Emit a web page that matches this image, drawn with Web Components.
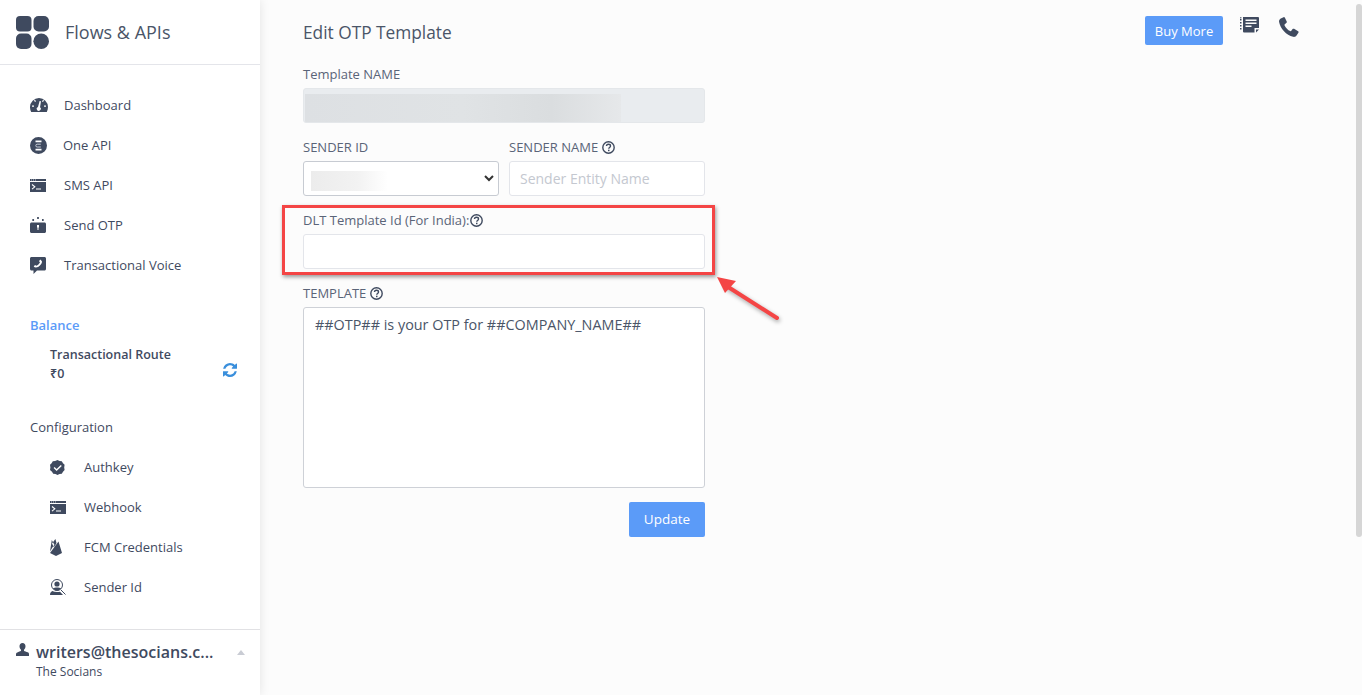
<!DOCTYPE html>
<html>
<head>
<meta charset="utf-8">
<title>Edit OTP Template</title>
<style>
html, body { margin: 0; height: 100%; overflow: hidden; }
body { font-family: "Open Sans", "Noto Sans", sans-serif; color: #3f4a5f; background: #fff; }
</style>
</head>
<body>
<app-shell>
    <side-bar slot="side"></side-bar>
    <otp-form></otp-form>
</app-shell>

<script>
// small icon set used by the sidebar and the top bar
const ICONS = {
    grid: '<svg width="33" height="33" viewBox="0 0 33 33"><rect width="15.500" height="15.500" rx="4"/><rect x="17.500" width="15.500" height="15.500" rx="5"/><rect y="17.500" width="15.500" height="15.500" rx="5"/><circle cx="25.200" cy="25.200" r="7.800"/></svg>',
    gauge: '<svg width="18" height="14" viewBox="0 0 18 14"><path fill-rule="evenodd" d="M9 0a9 9 0 0 1 9 9c0 1.800-.4 3.500-1.200 5H1.200A10 10 0 0 1 0 9a9 9 0 0 1 9-9zM5 1.800 4 2.500l1 1.500 1-.7zM13 1.800l-1 1.700 1 .6 1-1.600zM2 7.500v1.200h2V7.500zM14 7.500v1.200h2V7.500zM9.600 3 8 9a2 2 0 1 0 2 .3l1-6z"/></svg>',
    oneapi: '<svg width="17" height="17" viewBox="0 0 17 17"><path fill-rule="evenodd" d="M8.500 0a8.500 8.500 0 1 1 0 17 8.500 8.500 0 0 1 0-17zM5.500 3.500v1.800h6V3.500zM5.500 11.800v1.800h6v-1.800z"/><path d="M10.800 7.200H7.200a1.300 1.300 0 0 0 0 2.800h3.600" fill="none" stroke="#c9ced8" stroke-width="1"/></svg>',
    term: '<svg width="16" height="13" viewBox="0 0 16 13"><path d="M0 0h16v2H0zM0 3h16v10H0z"/><path d="M1 .5h1v1H1zm2 0h1v1H3zm2 0h1v1H5z" fill="#c9ced8"/><path d="M2 5.500 4.800 7.800 2 10.100" fill="none" stroke="#fff" stroke-width="1.100"/><path d="M6 9.500h5v1H6z" fill="#fff"/></svg>',
    otp: '<svg width="16" height="16" viewBox="0 0 16 16"><path d="M7.300 0h1.400l.3 1-.3 1H7.300L7 1zM2.500 2h1.300l.4 1-.4 1H2.500L2.200 3zM12.200 2h1.300l.3 1-.3 1h-1.300L11.900 3z"/><path fill-rule="evenodd" d="M1.500 5.500h13c.8 0 1.500.7 1.500 1.500v7.500c0 .8-.7 1.500-1.500 1.500h-13C.7 16 0 15.300 0 14.500V7c0-.8.7-1.500 1.500-1.500zM7 8v2.500h.5V13h1v-2.500H9V8z"/></svg>',
    voice: '<svg width="16" height="17" viewBox="0 0 16 17"><path fill-rule="evenodd" d="M1.500 0h13c.8 0 1.500.7 1.500 1.500v10.500c0 .8-.7 1.500-1.500 1.500H7L3.500 17v-3.500h-2C.7 13.500 0 12.800 0 12V1.500C0 .7.700 0 1.500 0zM10.500 2.500 9 4l1 1.500-1.800 2.200-1.700 1L5 8 3.700 9.500c1 1.300 3 1.300 4.800.2 2-1.300 3.500-3.300 3.500-5.200z"/></svg>',
    badge: '<svg width="15" height="15" viewBox="0 0 15 15"><path fill-rule="evenodd" d="M7.500 0l2 1 2.300.2 1.200 2 1.600 1.600-.4 2.700.4 2.600-1.600 1.600-1.200 2-2.300.2-2 1-2-1-2.300-.2-1.200-2L0 10.100l.4-2.600L0 4.800l1.600-1.600 1.200-2L5.100 1zM10.800 5 6.600 9l-2-1.900-1 1 3 3 5.200-5.100z"/></svg>',
    firebase: '<svg width="12" height="17" viewBox="0 0 12 17"><path d="M0 12.500 1.800 1l2.700 5L3 7.500zM5 6.800 6.500 4 5.400 0 2 4.600 3.800 8zM8.500 2.500 12 14l-6 3-6-3z"/></svg>',
    sender: '<svg width="16" height="16" viewBox="0 0 16 16"><circle cx="7" cy="6" r="5.500" fill="none" stroke="currentColor"/><circle cx="7" cy="5" r="2.600"/><path d="M2.800 9.500C4 8.600 5.500 8.500 7 8.500s3 .1 4.200 1L8.500 11.500h-3zM0 16c0-1.900.9-3.100 2.300-3.900 1.400.6 2.900 1 4.700 1 1.200 0 2.100-.1 3-.4l3 3.300z"/><path d="M11 11l4.500 4.500" stroke="currentColor" fill="none"/></svg>',
    refresh: '<svg width="14" height="14" viewBox="0 0 1536 1536"><path d="M1511 928q0 5-1 7-64 268-268 434.500T764 1536q-146 0-282.500-55T238 1324l-129 129q-19 19-45 19t-45-19-19-45V960q0-26 19-45t45-19h448q26 0 45 19t19 45-19 45l-137 137q71 66 161 102t187 36q134 0 250-65t186-179q11-17 53-117 8-23 30-23h192q13 0 22.500 9.500t9.500 22.500zm25-800v448q0 26-19 45t-45 19h-448q-26 0-45-19t-19-45 19-45l138-138Q969 256 768 256q-134 0-250 65T332 500q-11 17-53 117-8 23-30 23H50q-13 0-22.500-9.500T18 608v-7q65-268 270-434.500T768 0q146 0 284 55.500T1297 212l130-129q19-19 45-19t45 19 19 45z"/></svg>',
    user: '<svg width="13" height="13" viewBox="0 0 13 13"><path d="M6.500 0c1.900 0 3 1.400 3 3.300 0 1.300-.6 2.700-1.500 3.400v1c.6.500 2.500 1 3.700 1.600.9.400 1.300 1 1.300 1.700V13H0v-1.900c0-.7.400-1.300 1.300-1.700C2.500 8.800 4.400 8.300 5 7.700v-1C4.100 6 3.500 4.600 3.500 3.300c0-1.900 1.100-3.300 3-3.300z"/></svg>',
    notes: '<svg width="19" height="16" viewBox="0 0 19 16"><path d="M0 2h1.500v1.500H0zM0 5h1.500v1.500H0zM0 8h1.500v1.500H0zM0 11h1.500v1.500H0z"/><path d="M.3 0h1v1.500h-1z"/><path fill-rule="evenodd" d="M3 0h15a1 1 0 0 1 1 1v10h-4.500v4.500H4a1 1 0 0 1-1-1zM5.500 2.500V4h11V2.500zM5.500 5.500V7h11V5.500zM5.500 8.500V10h6V8.500z"/><path d="M16 12.500h3L16 15.500z"/></svg>',
    phone: '<svg width="20" height="20" viewBox="0 0 20 20"><path d="M4.600.2 1.800 1.400C.6 2-.2 3.300.1 4.900c1.300 6.800 7.200 13 14 14.900 1.500.4 2.900-.4 3.600-1.500l1.700-2.600c.3-.5.200-1.100-.3-1.400l-4-2.500c-.5-.3-1.100-.2-1.500.3l-1.500 1.800c-.3.300-.7.400-1 .2C8.900 12.900 6.800 10.700 5.600 8.400c-.2-.4-.1-.8.200-1.100L7.500 5.700c.4-.4.400-1 .1-1.400L5.800.6C5.500.2 5 0 4.600.2z"/></svg>',
    help: '<svg width="13" height="13" viewBox="0 0 13 13"><circle cx="6.500" cy="6.500" r="5.700" fill="none" stroke="currentColor" stroke-width="1.400"/><path d="M4.500 5.100c0-1.200.9-1.800 2-1.800s2 .6 2 1.700c0 1.500-1.700 1.400-1.700 2.700" fill="none" stroke="currentColor" stroke-width="1.400"/><rect x="6" y="8.700" width="1.500" height="1.500"/></svg>'
};

class AppShell extends HTMLElement {
    constructor() {
        super();
        const shadow = this.attachShadow({ mode: "open" });
        shadow.innerHTML = `
        <style>
        :host { display: flex; height: 695px; width: 1366px; overflow: hidden; background: #fff; }
        .page { flex: none; width: 1362px; display: flex; background: #fcfcfc; position: relative; }
        .content { flex: 1; min-width: 0; }
        .scroll { position: absolute; right: 0; top: 4px; width: 6px; height: 533px; background: #d6d6d6; border-radius: 3px; }
        </style>
        <div class="page">
            <slot name="side"></slot>
            <div class="content"><slot></slot></div>
            <div class="scroll"></div>
        </div>`;
    }
}

class NavItem extends HTMLElement {
    constructor() {
        super();
        const shadow = this.attachShadow({ mode: "open" });
        const gap = this.getAttribute("gap") || 64;
        shadow.innerHTML = `
        <style>
        :host { display: block; height: 40px; }
        a { display: flex; align-items: center; height: 40px; color: #3f4a5f; font-size: 13px; }
        .ico { flex: none; width: ${gap - 30}px; display: flex; align-items: center; fill: #3f4a5f; color: #3f4a5f; }
        svg { display: block; }
        </style>
        <a><span class="ico">${ICONS[this.getAttribute("icon")]}</span><slot></slot></a>`;
    }
}

class SideBar extends HTMLElement {
    constructor() {
        super();
        const shadow = this.attachShadow({ mode: "open" });
        shadow.innerHTML = `
        <style>
        :host { display: flex; flex-direction: column; flex: none; width: 260px; height: 695px; background: #fff; box-shadow: 0 0 10px rgba(0,0,0,.1); position: relative; }
        .brand { display: flex; align-items: center; gap: 16px; height: 64px; padding-left: 16px; border-bottom: 1px solid #e4e5ea; font-size: 18px; color: #4a5568; fill: #3f4a5f; box-sizing: content-box; }
        .brand svg { display: block; }
        .nav { padding: 20px 0 0 30px; }
        .balance { margin-top: 31px; padding: 0 23px 0 30px; }
        .bal-title { color: #5b9bf8; font-size: 13px; font-weight: 600; height: 18px; line-height: 18px; }
        .route { display: flex; justify-content: space-between; align-items: flex-start; padding: 11px 0 0 20px; fill: #3a8fdc; }
        .route svg { margin-top: 18px; }
        .route b { display: block; font-size: 12.500px; font-weight: 600; line-height: 19px; color: #3f4a5f; }
        .conf-title { margin: 35px 0 0 30px; font-size: 13px; line-height: 18px; color: #3f4a5f; }
        .conf { padding: 11px 0 0 50px; }
        .foot { margin-top: auto; height: 66px; border-top: 1px solid #e1e1e4; display: flex; padding: 11px 15px 0 16px; box-sizing: border-box; fill: #3f4a5f; }
        .foot .who { flex: 1; min-width: 0; padding-left: 7px; }
        .foot .mail { font-size: 16px; font-weight: 600; line-height: 22px; }
        .foot .org { font-size: 12px; line-height: 18px; }
        .foot svg { margin-top: 2px; }
        .caret { width: 0; height: 0; margin: 9px 0 0 0; border: 4px solid transparent; border-top: 0; border-bottom: 5px solid #c9ccd4; }
        </style>
        <div class="brand">${ICONS.grid}<span>Flows &amp; APIs</span></div>
        <div class="nav">
            <nav-item icon="gauge">Dashboard</nav-item>
            <nav-item icon="oneapi" gap="63">One API</nav-item>
            <nav-item icon="term">SMS API</nav-item>
            <nav-item icon="otp">Send OTP</nav-item>
            <nav-item icon="voice">Transactional Voice</nav-item>
        </div>
        <div class="balance">
            <div class="bal-title">Balance</div>
            <div class="route">
                <div><b>Transactional Route</b><b>₹0</b></div>
                ${ICONS.refresh}
            </div>
        </div>
        <div class="conf-title">Configuration</div>
        <div class="conf">
            <nav-item icon="badge">Authkey</nav-item>
            <nav-item icon="term">Webhook</nav-item>
            <nav-item icon="firebase">FCM Credentials</nav-item>
            <nav-item icon="sender">Sender Id</nav-item>
        </div>
        <div class="foot">
            ${ICONS.user}
            <div class="who">
                <div class="mail">writers@thesocians.c...</div>
                <div class="org">The Socians</div>
            </div>
            <div class="caret"></div>
        </div>`;
    }
}

class FormField extends HTMLElement {
    constructor() {
        super();
        const shadow = this.attachShadow({ mode: "open" });
        const help = this.hasAttribute("help");
        const gap = this.getAttribute("gap") || 4;
        shadow.innerHTML = `
        <style>
        :host { display: block; }
        label { display: flex; align-items: center; gap: ${gap}px; font-size: 13px; line-height: 18px; color: #5a6478; padding-top: 1px; margin-bottom: 5px; }
        svg { display: block; fill: #3f4a5f; color: #3f4a5f; }
        </style>
        <label>${this.getAttribute("label")}${help ? ICONS.help : ""}</label>
        <slot></slot>`;
    }
}

class OtpForm extends HTMLElement {
    constructor() {
        super();
        const shadow = this.attachShadow({ mode: "open" });
        shadow.innerHTML = `
        <style>
        :host { display: block; position: relative; height: 695px; padding: 0 0 0 43px; box-sizing: border-box; }
        .top { display: flex; align-items: center; height: 64px; }
        h1 { font-size: 17.300px; font-weight: 400; margin: 0; color: #4a5568; }
        .actions { position: absolute; left: 885px; top: 16px; display: flex; align-items: flex-start; fill: #3f4a5f; }
        .buy { width: 78px; height: 29px; background: #5b9bf8; color: #fff; border-radius: 2px; font-size: 13px; display: flex; align-items: center; justify-content: center; margin-right: 17px; }
        .actions svg { display: block; margin: 1px 20px 0 0; }
        form { width: 402px; display: flex; flex-direction: column; }
        .box { display: block; box-sizing: border-box; width: 100%; height: 35px; background: #fff; border: 1px solid #e3e5ea; border-radius: 3px; font-size: 14px; color: #c4c8d0; padding: 0 10px; display: flex; align-items: center; }
        .ro { background: #e9ecef; position: relative; overflow: hidden; border-color: #e4e7ea; }
        .blur { position: absolute; left: 1px; top: 5px; width: 316px; height: 30px; background: linear-gradient(90deg, #dde0e3 0%, #e0e3e5 50%, #dadddf 78%, #e6e8ea 100%); }
        .row { display: flex; gap: 10px; margin-top: 14px; }
        .row form-field { flex: 1; min-width: 0; }
        .sel { position: relative; border-color: #c7cbd2; color: #222; }
        .sel i { position: absolute; left: 7px; top: 9px; width: 77px; height: 20px; background: linear-gradient(90deg, #ececec, #f2f2f2 60%, #fff); }
        .sel svg { position: absolute; right: 4px; top: 13px; }
        .dlt { margin-top: 14px; }
        .tpl { margin-top: 14px; }
        .area { height: 181px; display: block; padding: 7px 11px; color: #4a5568; font-size: 14.400px; line-height: 20px; border-color: #ced1d7; }
        .foot { display: flex; justify-content: flex-end; margin-top: 14px; }
        .update { width: 76px; height: 35px; padding-bottom: 2px; box-sizing: border-box; background: #5b9bf8; color: #fff; border-radius: 2px; font-size: 13.500px; display: flex; align-items: center; justify-content: center; }
        .mark { position: absolute; left: 22px; top: 205px; width: 433px; height: 70px; box-sizing: border-box; border: 3px solid #f44545; box-shadow: 1px 2px 4px rgba(0,0,0,.4); pointer-events: none; }
        .arrow { position: absolute; left: 450px; top: 268px; overflow: visible; pointer-events: none; }
        </style>
        <div class="top"><h1>Edit OTP Template</h1></div>
        <div class="actions">
            <div class="buy">Buy More</div>
            ${ICONS.notes}
            ${ICONS.phone}
        </div>
        <form>
            <form-field label="Template NAME"><div class="box ro"><div class="blur"></div></div></form-field>
            <div class="row">
                <form-field label="SENDER ID"><div class="box sel"><i></i><svg width="10" height="7" viewBox="0 0 10 7"><path d="M1 1l4 4 4-4" fill="none" stroke="#333" stroke-width="2"/></svg></div></form-field>
                <form-field label="SENDER NAME" help><div class="box">Sender Entity Name</div></form-field>
            </div>
            <form-field class="dlt" label="DLT Template Id (For India):" help gap="1"><div class="box"></div></form-field>
            <form-field class="tpl" label="TEMPLATE" help><div class="box area">##OTP## is your OTP for ##COMPANY_NAME##</div></form-field>
            <div class="foot"><div class="update">Update</div></div>
        </form>
        <div class="mark"></div>
        <svg class="arrow" width="70" height="60" viewBox="0 0 70 60">
            <path d="M67 50 15 17" stroke="#f44545" stroke-width="4" stroke-linecap="round" fill="none" style="filter:drop-shadow(1px 2px 2px rgba(0,0,0,.35))"/>
            <path d="M7 9 26 13 15 25z" fill="#f44545"/>
        </svg>`;
    }
}

customElements.define("app-shell", AppShell);
customElements.define("nav-item", NavItem);
customElements.define("side-bar", SideBar);
customElements.define("form-field", FormField);
customElements.define("otp-form", OtpForm);
</script>
</body>
</html>
